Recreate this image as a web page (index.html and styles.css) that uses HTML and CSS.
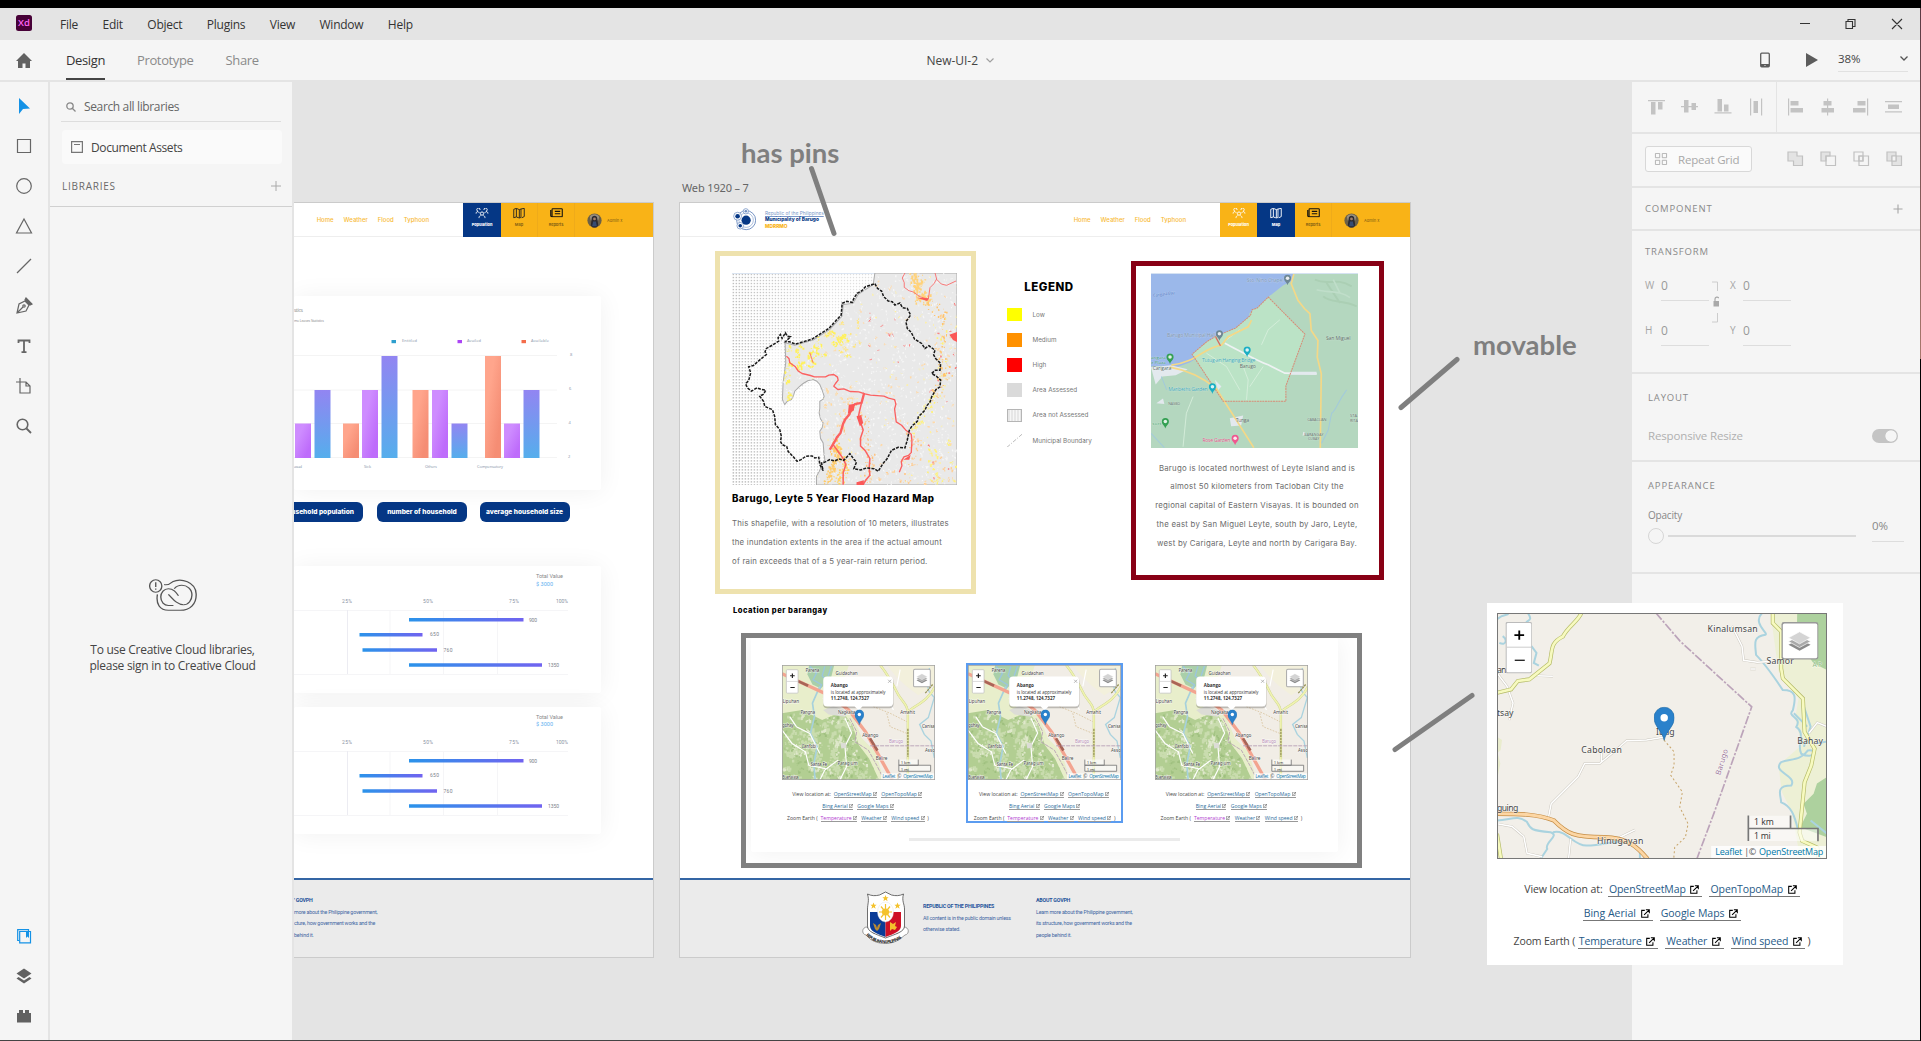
FILE: index.html
```html
<!DOCTYPE html>
<html lang="en">
<head>
<meta charset="utf-8">
<title>New-UI-2</title>
<link rel="stylesheet" href="styles.css">
</head>
<body>
<svg class="defs" aria-hidden="true">
  <defs>
    <linearGradient id="gBlue" x1="0" y1="0" x2="0" y2="1"><stop offset="0" stop-color="#9285f2"/><stop offset="1" stop-color="#55aeec"/></linearGradient>
    <linearGradient id="gPurple" x1="0" y1="0" x2="1" y2="1"><stop offset=".3" stop-color="#ce8cff"/><stop offset=".8" stop-color="#be6cfb"/></linearGradient>
    <linearGradient id="gOrange" x1="0" y1="0" x2="1" y2="1"><stop offset=".3" stop-color="#ffa58c"/><stop offset=".8" stop-color="#f58d74"/></linearGradient>
    <linearGradient id="gRange" x1="0" y1="0" x2="1" y2="0"><stop offset="0" stop-color="#2b93ea"/><stop offset="1" stop-color="#7163f0"/></linearGradient>
    <pattern id="dots" width="9" height="9" x="187" y="431" patternUnits="userSpaceOnUse"><rect x="2" y="3" width="3.200" height="3.200" fill="#777"/></pattern>
    <path id="woodsShape" d="M37 190l60-10 60 30 60-25 30 40 20 60 30 40 30 64H37z"/>
    <clipPath id="woodsClip"><use href="#woodsShape"/></clipPath>
  </defs>
  <symbol id="i-people" viewBox="0 0 40 32"><g fill="none" stroke="currentColor" stroke-width="2.800"><circle cx="20" cy="17" r="5"/><path d="M11 31v-2c0-4 3-5 5-6M29 31v-2c0-4-3-5-5-6M8 10a5 5 0 1 1 6-4M32 10a5 5 0 1 0-6-4M2 17c0-4 2-6 6-6l5 5M38 17c0-4-2-6-6-6l-5 5"/></g></symbol>
  <symbol id="i-map" viewBox="0 0 36 32"><path d="M2 4l8-3 9 4 5-2v26l-5 2-9-4-8 3zM10 1v26M19 5v26M24 3l10-2v25l-8 4" fill="none" stroke="currentColor" stroke-width="2.800"/></symbol>
  <symbol id="i-news" viewBox="0 0 38 28"><path d="M8 2h26a2 2 0 0 1 2 2v20a2 2 0 0 1-2 2H8a2 2 0 0 1-2-2V4a2 2 0 0 1 2-2zM2 6v17c0 2 2 3 5 3M14 10h16M14 17h16" fill="none" stroke="#111" stroke-width="3.200"/></symbol>
  <symbol id="i-ext" viewBox="0 0 26 26"><path d="M11 4H2v20h18v-9M14 2h10v10M23 3L9 17" fill="none" stroke="currentColor" stroke-width="3"/></symbol>
  <symbol id="i-pin" viewBox="0 0 60 100"><path d="M30 99C24 70 0 58 0 32a30 31 0 0 1 60 0C60 58 36 70 30 99z" fill="#2a81cb" stroke="#236da8" stroke-width="2"/><circle cx="30" cy="32" r="11" fill="#fff"/></symbol>
  <symbol id="i-gpin" viewBox="0 0 22 32"><path d="M11 31C9 22 1 20 1 11a10 10 0 0 1 20 0c0 9-8 11-10 20z" fill="currentColor"/><circle cx="11" cy="11" r="5" fill="#fff" opacity=".85"/></symbol>
  <symbol id="i-layers3" viewBox="0 0 68 60"><path d="M1 41l33-17 33 17-33 18z" fill="#8b8b8b"/><path d="M1 31l33-17 33 17-33 18z" fill="#a9a9a9" stroke="#fff" stroke-width="2"/><path d="M1 20L34 2l33 18-33 18z" fill="#d4d4d4" stroke="#fff" stroke-width="2"/></symbol>
  <symbol id="avatar" viewBox="0 0 16 16"><circle cx="8" cy="8" r="7.600" fill="#6c6047"/><path d="M3 4c3-4 8-3 10 0l-1 4H4z" fill="#9a8f80"/><path d="M5 6c0-4 6-4 6 0l1 7-2 2.500H6L4 13z" fill="#2c2a30"/><circle cx="8" cy="6.300" r="1.500" fill="#a67f68"/><path d="M5.500 14l1-5h3l1 5z" fill="#364c73"/></symbol>
  <symbol id="osm-small" viewBox="37 46 457 343" preserveAspectRatio="none">
    <rect x="37" y="46" width="457" height="343" fill="#f1ede6"/>
    <path d="M37 46h200l-20 60-60 40 40 40 50 10 30 70 40 40 24 83H37z" fill="#e8eecb"/>
    <use href="#woodsShape" fill="#b2ce92"/>
    <g id="woodFlecks" clip-path="url(#woodsClip)"></g>
    <path d="M350 46h144v60l-50 30-40-30-30-30z" fill="#f3f0dc"/>
    <path d="M118 46h75l-10 40-30 30-25-12-15-30z" fill="#a9cfa9"/>
    <path d="M120 50l20 20-10 20 25 15-8 20M165 50l-8 28 14 14M185 48l-10 30" fill="none" stroke="#9cc6dd" stroke-width="4"/>
    <path d="M150 110l-22 50 6 40-12 50 20 40-10 50 4 49" fill="none" stroke="#a6d1dc" stroke-width="5"/>
    <path d="M478 55l-12 30 10 40 16 18-18 60-26 20 14 30 20 20 10 50" fill="none" stroke="#aad3df" stroke-width="4"/>
    <path d="M37 240l30 40 40 25 10 40 50 10M60 200l20 30 40 20 30 60M210 389l20-40-5-60 20-40-20-45M150 389l15-30 40-30M300 90l40 30 30 60M390 60l-10 50" fill="none" stroke="#fff" stroke-width="3.500"/>
    <path d="M330 46c25 30 45 70 55 90 20 30 28 30 28 60v193M413 186c20-20 60-30 81-76" fill="none" stroke="#c9cf8a" stroke-width="7"/>
    <path d="M330 46c25 30 45 70 55 90 20 30 28 30 28 60v193M413 186c20-20 60-30 81-76" fill="none" stroke="#eff3b0" stroke-width="5"/>
    <path d="M413 236v84M465 130l22-26" stroke="#97945a" stroke-width="4" stroke-dasharray="7 2"/>
    <path d="M37 72l140 64 60 45 50 65 80 143" fill="none" stroke="#f3a490" stroke-width="10"/>
    <path d="M85 94l30 14M300 265l22 36" stroke="#a86557" stroke-width="8"/>
    <path d="M240 205l20 40-5 30 40 25 25 45 20 40M300 287h194" fill="none" stroke="#b49ab2" stroke-width="2.500" stroke-dasharray="12 3"/>
    <path d="M310 170l50 20 50 25M350 190l10 40 50 20" fill="none" stroke="#d2b98c" stroke-width="2" stroke-dasharray="5 4"/>
    <path d="M160 180l30-12 40 14-4 18-50-6zM212 280l15-3 3 16-16 2z" fill="#dcdcd6"/>
    <g class="map-label" font-size="14">
      <text x="107" y="66" textLength="42">Parena</text><text x="197" y="76" textLength="66">Guidaohan</text><text x="39" y="158" textLength="49">Lipuhan</text><text x="92" y="192" textLength="44">Pangna</text><text x="204" y="192" textLength="52">Nagkalta</text><text x="390" y="193" textLength="44">Amahit</text><text x="37" y="231" textLength="35">gohay</text><text x="95" y="294" textLength="45">Canfobi</text><text x="277" y="261" textLength="48">Abango</text><text x="317" y="329" textLength="35">Balire</text><text x="122" y="346" textLength="50">Santa Fe</text><text x="203" y="343" textLength="60">Parag-um</text><text x="455" y="235" textLength="39">Canisa</text><text x="464" y="306" textLength="30">Asso</text><text x="37" y="387" textLength="50">Buenavista</text><text x="357" y="280" textLength="42" fill="#b58bb4">Barugo</text>
    </g>
    <path d="M386 328v17h58v-17M386 345v18h95v-18z" fill="#fff8" stroke="#777" stroke-width="2.500"/>
    <g class="sans" font-size="13" fill="#333"><text x="392" y="342" textLength="28">1 km</text><text x="392" y="361" textLength="24">1 mi</text></g>
    <rect x="333" y="369" width="160" height="19" fill="#ffffffc0"/>
    <g class="sans" font-size="14" fill="#1581b5"><text x="337" y="384" textLength="39">Leaflet</text><text x="380" y="384" fill="#555" textLength="14">| ©</text><text x="399" y="384" textLength="89">OpenStreetMap</text></g>
    <rect x="50" y="60" width="35" height="70" rx="3" fill="#fff" stroke="#bbb" stroke-width="2"/><path d="M50 95h35" stroke="#ccc" stroke-width="2"/><path d="M61 78h14M68 71v14M62 113h13" stroke="#222" stroke-width="3.500"/>
    <rect x="430" y="59" width="50" height="52" rx="4" fill="#fff" stroke="#aaa" stroke-width="3"/><use href="#i-layers3" x="438" y="70" width="34" height="32"/>
    <rect x="160" y="83" width="210" height="92" rx="12" fill="#00000038"/>
    <path d="M172 80h185q12 0 12 12v66q0 12-12 12h-80l-11 12-12-12h-82q-12 0-12-12V92q0-12 12-12z" fill="#fff"/>
    <g class="sans" font-size="14.500" fill="#333"><text x="183" y="112" font-weight="700" textLength="51" lengthAdjust="spacingAndGlyphs">Abango</text><text x="183" y="132" textLength="163" lengthAdjust="spacingAndGlyphs">is located at approximately</text><text x="183" y="151" font-weight="700" textLength="114" lengthAdjust="spacingAndGlyphs">11.2748, 124.7327</text></g>
    <path d="M354 90l9 9m0-9l-9 9" stroke="#aaa" stroke-width="2.500"/>
    <use href="#i-pin" x="254" y="179" width="28" height="46"/>
    <rect x="38" y="47" width="455" height="341" fill="none" stroke="#a0a0a0" stroke-width="2.500"/>
  </symbol>
</svg>

<div class="app">
  <header class="titlebar">
    <svg class="xd" viewBox="0 0 16 16"><rect width="16" height="16" rx="2.500" fill="#470137"/><text x="8" y="11.300" text-anchor="middle" font-size="9.500" font-weight="600" fill="#ff61f6">Xd</text></svg>
    <nav class="menu"><span>File</span><span>Edit</span><span>Object</span><span>Plugins</span><span>View</span><span>Window</span><span>Help</span></nav>
    <div class="winctl">
      <svg viewBox="0 0 104 12"><g fill="none" stroke="#333" stroke-width="1.100"><path d="M0 5.500h10M46 3.500h6.500v7H46zM48 3.500v-2h7v7h-2.500M92 1l10 10m0-10L92 11"/></g></svg>
    </div>
  </header>
  <div class="toolbar">
    <svg class="home" viewBox="0 0 16 15"><path d="M8 0l8 8h-2v7H9.500v-4.500h-3V15H2V8H0z" fill="#616161"/></svg>
    <nav class="modes"><span class="on">Design</span><span>Prototype</span><span>Share</span></nav>
    <div class="docname">New-UI-2 <svg viewBox="0 0 8 5"><path d="M.5.5L4 4 7.500.5" fill="none" stroke="#a0a0a0" stroke-width="1.200"/></svg></div>
    <svg class="phone" viewBox="0 0 10 16"><rect x=".7" y="1.200" width="8.600" height="13.600" rx="1" fill="none" stroke="#5c5c5c" stroke-width="1.300"/><path d="M1 12h8v3H1z" fill="#5c5c5c"/><circle cx="5" cy="13.500" r=".6" fill="#fff"/></svg>
    <svg class="play" viewBox="0 0 12 14"><path d="M0 0l12 7-12 7z" fill="#5c5c5c"/></svg>
    <div class="zoomsel"><span>38%</span><svg viewBox="0 0 8 5"><path d="M.5.5L4 4 7.500.5" fill="none" stroke="#555" stroke-width="1.300"/></svg></div>
  </div>

  <div class="body">
    <aside class="tools">
      <div class="toolset">
        <svg viewBox="0 0 20 20"><path d="M5 2v16l4-5 7-.5z" fill="#1492e6"/></svg>
        <svg viewBox="0 0 20 20"><path d="M3.500 3.500h13v13h-13z"/></svg>
        <svg viewBox="0 0 20 20"><circle cx="10" cy="10" r="7.300"/></svg>
        <svg viewBox="0 0 20 20"><path d="M10 3l7.500 14h-15z"/></svg>
        <svg viewBox="0 0 20 20"><path d="M3 17L17 3"/></svg>
        <svg viewBox="0 0 20 20"><path d="M3 17l2-9 6-3 4 4-3 6zM3 17l6-6"/><path d="M12 2l6 6-2 1-5-5z" fill="#666"/><circle cx="10" cy="10" r="1.200"/></svg>
        <svg viewBox="0 0 20 20"><path d="M4.500 7V4.500h11V7M10 4.500v12M7.500 16.200h5" stroke-width="1.800"/></svg>
        <svg viewBox="0 0 20 20"><path d="M6 2v4M2 6h10l4 4v7H6V6M12 6v4h4"/></svg>
        <svg viewBox="0 0 20 20"><circle cx="8.500" cy="8.500" r="5.300" stroke-width="1.600"/><path d="M12.500 12.500L17 17" stroke-width="1.800"/></svg>
      </div>
      <div class="toolset bottom">
        <svg viewBox="0 0 20 20"><path d="M14.500 5V3.700H3.700v10.800H5M5.700 5.500h10.800v11.300H5.700z" stroke="#1492e6"/><path d="M12 5.500h3V12l-1.500-1.500L12 12z" fill="#1492e6" stroke="none"/></svg>
        <svg viewBox="0 0 20 20"><path d="M10 2.500l7.500 5-7.500 5-7.500-5zM4.500 11L2.500 12.500l7.500 5 7.500-5-2-1.500-5.500 3.500z" fill="#616161" stroke="none"/></svg>
        <svg viewBox="0 0 20 20"><path d="M3 7h2V4h4v3h2V4h4v3h2v9.500H3z" fill="#616161" stroke="none"/></svg>
      </div>
    </aside>
    <aside class="libs">
      <div class="search"><svg viewBox="0 0 10 10"><circle cx="4" cy="4" r="3.200"/><path d="M6.500 6.500L9.500 9.500"/></svg><span>Search all libraries</span></div>
      <div class="docassets"><svg viewBox="0 0 12 12"><path d="M.6.600h10.800v10.800H.6zM3 3.500h6"/></svg><span>Document Assets</span></div>
      <div class="libhead"><span>LIBRARIES</span><svg viewBox="0 0 10 10"><path d="M5 0v10M0 5h10"/></svg></div>
      <div class="signin">
        <svg viewBox="0 0 114 92" preserveAspectRatio="none"><g fill="none" stroke="#555" stroke-width="3.200"><ellipse cx="16" cy="20" rx="14.500" ry="18"/><path d="M16 9v14M16 27v4"/><path d="M36 16c6 2 14-2 20-8 20-12 55 0 56 35 1 28-14 47-38 47H46C26 90 16 72 20 44"/><path d="M82 74c12 0 20-14 20-28 0-18-12-28-24-28-8 0-14 4-18 10"/><path d="M70 48C64 38 58 28 46 28c-10 0-18 10-18 24s8 24 18 24h12"/><path d="M46 44c10 12 20 30 36 30"/></g></svg>
        <p>To use Creative Cloud libraries,<br>please sign in to Creative Cloud</p>
      </div>
    </aside>

    <main class="canvas">
      <section class="artboard ab1">
        <header class="sitebar">
          <nav class="sitenav"><span>Home</span><span>Weather</span><span>Flood</span><span>Typhoon</span></nav>
          <div class="tabs">
            <div class="tab active"><svg class="ic-people"><use href="#i-people"/></svg><b>Population</b></div>
            <div class="tab line"><svg class="ic-map"><use href="#i-map"/></svg><b>Map</b></div>
            <div class="tab line"><svg class="ic-news"><use href="#i-news"/></svg><b>Reports</b></div>
            <div class="user"><svg><use href="#avatar"/></svg><span>Admin x</span></div>
          </div>
        </header>
        <div class="card chart">
          <svg viewBox="294 296 307.500 194">
            <g class="sans" fill="#888" font-size="4"><text x="294" y="312" font-size="5" textLength="9">stics</text><text x="294" y="321.500" font-size="3.500" textLength="30">mo Leaves Statistics</text></g>
            <g fill="none" stroke="#f4f4f4"><path d="M294 355.500h263M294 390h263M294 423.500h263M294 457.500h263"/></g>
            <path d="M391.500 340h4.500v3.200h-4.500z" fill="#2e9fce"/><path d="M457.500 340h4.500v3.200h-4.500z" fill="#ac45f5"/><path d="M521.500 340h4.500v3.200h-4.500z" fill="#f46d4c"/>
            <g class="sans" fill="#8592a8" font-size="4"><text x="402" y="341.500" textLength="15">Entitled</text><text x="467" y="341.500" textLength="14">Availed</text><text x="531" y="341.500" textLength="18">Available</text>
            <text x="570" y="356">8</text><text x="569" y="390">6</text><text x="568.500" y="423.500">4</text><text x="568" y="457.500">2</text>
            <text x="294" y="467.500" textLength="8">asual</text><text x="364" y="467.500" textLength="7">Sick</text><text x="425" y="467.500" textLength="12">Others</text><text x="477" y="467.500" textLength="26">Compensatory</text></g>
            <g fill="url(#gPurple)"><path d="M295 423.500h16V458h-16z"/><path d="M362 390h16v68h-16z"/><path d="M432 390h16v68h-16z"/><path d="M504 423.500h16V458h-16z"/></g>
            <g fill="url(#gBlue)"><path d="M314.500 390h16v68h-16z"/><path d="M381.500 356h16v102h-16z"/><path d="M451.500 423.500h16V458h-16z"/><path d="M523.500 390h16v68h-16z"/></g>
            <g fill="url(#gOrange)"><path d="M343 423.500h16V458h-16z"/><path d="M412.500 390h16v68h-16z"/><path d="M485 356h16v102h-16z"/></g>
          </svg>
        </div>
        <div class="pills"><span class="cut">ousehold population</span><span>number of household</span><span>average household size</span></div>
        <div class="card ranges one">
          <svg viewBox="294 566 307.500 127">
            <g id="rangeChart">
              <g class="cond" font-size="5" fill="#8a94a3"><text x="342" y="603" textLength="10">25%</text><text x="423" y="603" textLength="10">50%</text><text x="509" y="603" textLength="10">75%</text><text x="556" y="603" textLength="12">100%</text></g>
              <g fill="none" stroke="#f5f5f7"><path d="M294 610.500h274M294 674.500h274M390 610v64M443.500 610v64M497.500 610v64"/><path d="M347.500 610v64" stroke="#ececf2"/></g>
              <g fill="url(#gRange)"><path d="M409 618h114.500v3.600H409z"/><path d="M359.500 633h63v3.600h-63z"/><path d="M362.500 648.200h74.500v3.600h-74.500z"/><path d="M409 663.200h133v3.600H409z"/></g>
              <g class="cond" font-size="5" fill="#7d838c"><text x="529" y="621.500" textLength="8">900</text><text x="430" y="636.200" textLength="9">650</text><text x="443.500" y="652.200" textLength="9">760</text><text x="548" y="667" textLength="11">1350</text></g>
            </g>
            <g class="cond" font-size="5.500"><text x="536" y="578" fill="#888" textLength="27">Total Value</text><text x="536" y="586" fill="#5fb0f0" textLength="17">$ 3000</text></g>
          </svg>
        </div>
        <div class="card ranges">
          <svg viewBox="294 566 307.500 127">
            <use href="#rangeChart"/>
            <g class="cond" font-size="5.500"><text x="536" y="578" fill="#888" textLength="27">Total Value</text><text x="536" y="585" fill="#5fb0f0" textLength="17">$ 3000</text></g>
          </svg>
        </div>
        <footer class="sitefoot">
          <div class="fcol fa"><h4>' GOVPH</h4><p>more about the Philippine government,<br>cture, how government works and the<br>behind it.</p></div>
        </footer>
      </section>

      <div class="abname">Web 1920 – 7</div>
      <section class="artboard ab2">
        <header class="sitebar">
          <div class="brand">
            <svg viewBox="0 0 70 68"><g fill="none" stroke="#5b7fb8" stroke-width="2.500"><circle cx="40" cy="36" r="29"/><circle cx="40" cy="36" r="22" stroke="#9db3d8"/></g><circle cx="40" cy="36" r="14" fill="#053785"/><g fill="#fff" stroke="#5b7fb8" stroke-width="2"><circle cx="14" cy="24" r="12"/><circle cx="39" cy="9" r="8"/><circle cx="22" cy="53" r="10"/></g><g fill="#053785"><circle cx="14" cy="24" r="7"/><circle cx="39" cy="9" r="4" fill="#6f8fc2"/><circle cx="22" cy="53" r="5.500"/></g></svg>
            <div><i>Republic of the Philippines</i><b>Municipality of Barugo</b><b class="o">MDRRMO</b></div>
          </div>
          <nav class="sitenav"><span>Home</span><span>Weather</span><span>Flood</span><span>Typhoon</span></nav>
          <div class="tabs">
            <div class="tab lit"><svg class="ic-people"><use href="#i-people"/></svg><b>Population</b></div>
            <div class="tab active"><svg class="ic-map"><use href="#i-map"/></svg><b>Map</b></div>
            <div class="tab line"><svg class="ic-news"><use href="#i-news"/></svg><b>Reports</b></div>
            <div class="user"><svg><use href="#avatar"/></svg><span>Admin x</span></div>
          </div>
        </header>
        <div class="row">
          <article class="frame sand">
            <svg class="hazard" viewBox="187 431 674 635" preserveAspectRatio="none">
              <defs>
                <linearGradient id="fade"><stop offset="0" stop-color="#fff" stop-opacity="0"/><stop offset=".65" stop-color="#fff" stop-opacity=".6"/></linearGradient>
                <path id="land" d="M615 431H861V1066H440v-26l8-14 7-16 10-20-3-24-2-26-8-14-2-21 7-10 3-15-8-12-4-18 2-14 0-21 10-6 3-9-6-18-7-17-9-10-11-5-16 4-14 8-12 10-13 13-4 14-6 11-12 5-8 10-7-15 2-50 8-60-2-60 29 7 55-15 50-32 37-40 3-35 30-3 15-27 45-30z"/>
                <clipPath id="landClip"><use href="#land"/></clipPath>
              </defs>
              <rect x="187" y="431" width="674" height="635" fill="#fff"/>
              <rect x="187" y="431" width="450" height="635" fill="url(#dots)"/>
              <rect x="187" y="431" width="450" height="635" fill="url(#fade)"/>
              <path d="M343 640l-50 30-55 47 5 20-15 30 17 22 25-4 10 30 28 28 22 62 25 60 28 32 62-10 15-20 5-100-8-100-30-15-60 40-25 18z" fill="#fff" opacity=".6"/>
              <path d="M187 431.500h674" stroke="#cfdcee" stroke-width="3"/>
              <use href="#land" fill="#e9e9e9" stroke="#aaa" stroke-width="3"/>
              <g clip-path="url(#landClip)">
                <g id="specks"></g>
                <g fill="none" stroke="#fb6161" stroke-linejoin="round">
                  <path stroke-width="4" d="M350 680l8 8 2 12 17 12 8 12 12 8 25 6 12 4 33 0 10-5 15-2 11 8 2 9-8 10-5 8 12 10 18-2 20 8 25 1 18 6 17 4 40 3 14 6 18 4 4 14-4 14 2 16 3 23 16 10 12 14 17 13 2 20-2 35-8 8-14 5-8 14 2 12-8 20"/>
                  <path stroke-width="7" d="M583 790l-8 30-20 4-10 10-6 20-12 14-7 14-8 28-10 12-8 15-14 23"/>
                  <path stroke-width="4.500" d="M575 820l-6 25-4 20 8 16 7 20-8 24 0 24 14 14 14 24-2 26 2 24-12 14-8 14M490 945l16 22 14 20 8 18-8 24 0 36"/>
                  <path stroke-width="2.500" d="M705 431l-8 15 6 14 0 14 14 10 13 4 20 14 25 8 5-35 12-12 8-14-5-19M800 450l14 14 16 4 28-13M430 700l-10-30"/>
                </g>
                <path d="M838 616l23-8v30l-12-6zM537 826l18-3-3 20-18 10zM560 860l14-4 6 24-10 10zM560 1058l22-6v14h-22zM740 505l36 2-4 8zM700 990l22-14-4 14z" fill="#fb5858"/>
              </g>
              <path d="M615 463l8 14 12 8 6 16 14 14 12 2 8 10 15-6 8 14 14 2 10 20-14 20 4 20 12 12 10 20 21 13 10 15 12-8 18 13-4 14 6 11 15 15-2 20-14 0-11 10 14 8 13 12-2 20-12 8 -13 22-4 14-10 12-6 14-20 20-2 12-8 8-8 6-9 14-6 30-7 23-20-2-20 9-14 26-12 14-14 23-12-8-23-2-18 6-20-4 8-20-8-8-12-17-18 20-14-4-14 6-14-4-16 8-9 2 5 23-10-18-3-22-12 2-8-6-19 1-14 10-12 5-12-14-15-16-4-14-14-6-5-10 3-14-5-21-13-15-2-24-7-21-11-4-12-6-3-14-12-16 12-6 6-12-12-2-14-5-17 10-12-10-5-12 9-10 6-23-6-18 14-4 16-14 23-19-4-8 4-10 18-10 19-12-2-10 7-10 5 12 10-17 5 10 10 2-15 15 12 0 18 7 50-15 50-32 37-40 3-35 14-6 16 3 6-14 9-13 14-8 11-12z" fill="none" stroke="#1a1a1a" stroke-width="4.500" stroke-dasharray="9 3.500"/>
            </svg>
            <h3>Barugo, Leyte 5 Year Flood Hazard Map</h3>
            <p>This shapefile, with a resolution of 10 meters, illustrates<br>the inundation extents in the area if the actual amount<br>of rain exceeds that of a 5 year-rain return period.</p>
          </article>
          <div class="legend">
            <h2>LEGEND</h2>
            <ul>
              <li><i class="sw low"></i>Low</li><li><i class="sw med"></i>Medium</li><li><i class="sw high"></i>High</li><li><i class="sw area"></i>Area Assessed</li><li><i class="sw grid"></i>Area not Assessed</li>
              <li><svg class="sw" viewBox="0 0 15 13"><path d="M0 13L15 0" stroke="#bbb" stroke-dasharray="4 1.500 1 1.500"/></svg>Municipal Boundary</li>
            </ul>
          </div>
          <article class="frame maroon">
            <svg viewBox="514 280 620 524" preserveAspectRatio="none">
              <rect x="514" y="280" width="620" height="524" fill="#b4d7bf"/>
              <path d="M514 280H945l-10 25-25 12-45 35-20 28-36 20-4 25-40 40-30 15-55 38-50 30-60 22-20-12-36 2z" fill="#9bb8ea"/>
              <path d="M865 352L975 463l-57 155v46H730L637 523l45-38 25-15 60-25 45-38 5-17 15-5z" fill="#bbe3c6"/>
              <path d="M900 420l-35 30-20 45M790 560l15 40-5 60M640 650l-20 50-10 100M850 560l-40 60M680 520l60 40 40 70M740 480l40-30" fill="none" stroke="#d8efdd" stroke-width="2.500"/>
              <path d="M1005 300c40 20 60-10 110 20M1030 350c20 20 60 10 100 30M1040 310l40 60" fill="none" stroke="#abcfb4" stroke-width="6"/>
              <path d="M1010 330c30 10 70 0 100 24M1060 300l20 40" fill="none" stroke="#c0deca" stroke-width="5"/>
              <path d="M735 490c40 20 90 50 130 65l50 25 95 2" fill="none" stroke="#eef2f3" stroke-width="5"/>
              <path d="M514 562l60-6 50 12-36 18-40 4-20 24M750 715l40-8-6 30-30 2zM930 576h80v9h-80zM530 670l20-14 4 16zM970 755l12 8-14 4zM705 600l20 20-10 10z" fill="#e3e9ee"/>
              <path d="M570 562c60 10 110 40 140 65l112 176M575 556c80-10 90-50 150-60l20-25 60-30 10-20M942 282l-8 30 20 50 20 25 16 15 4 50 20 30-2 50 12 50-3 222" fill="none" stroke="#f4d887" stroke-width="5"/>
              <path d="M1100 630c-30 40-30 60-45 70l-10 50-20 40M545 590l16 40M514 760l40 43" fill="none" stroke="#a3cadb" stroke-width="3"/>
              <path d="M865 352L975 463l-57 155v46H730L637 523l45-38 25-15 60-25 45-38 5-17 15-5z" fill="none" stroke="#d78b76" stroke-width="3" stroke-dasharray="6 2"/>
              <path d="M708 472l14 26" stroke="#d86a60" stroke-width="4"/>
              <g color="#6d8794"><use href="#i-gpin" x="911" y="284" width="24" height="34"/><use href="#i-gpin" x="707" y="450" width="24" height="34"/></g>
              <g color="#1aaec4"><use href="#i-gpin" x="790" y="499" width="24" height="34"/><use href="#i-gpin" x="686" y="609" width="24" height="34"/></g>
              <g color="#34a053"><use href="#i-gpin" x="559" y="520" width="24" height="34"/><use href="#i-gpin" x="545" y="713" width="24" height="34"/></g>
              <use href="#i-gpin" x="754" y="763" width="24" height="34" color="#f0568f"/>
              <g class="sans halo" font-size="15.500" fill="#5d6d68">
                <text x="801" y="306" fill="#7796b5" textLength="110">Sto. Nino Chapel</text><text x="521" y="352" fill="#4272c4" font-size="13" textLength="65" transform="rotate(-8 521 352)">Carigara Bay</text>
                <text x="562" y="473" fill="#7c93aa" textLength="145">Barugo Municipal Hall</text><text x="514" y="537" fill="#3c9a66" font-size="13" textLength="44">arigara</text><text x="514" y="552" fill="#3c9a66" font-size="13" textLength="44">e Plaza</text><text x="519" y="571" textLength="56">Carigara</text>
                <text x="667" y="546" fill="#3fa9ba" textLength="160">Tutug-an Hanging Bridge</text><text x="780" y="564" textLength="48">Barugo</text><text x="566" y="632" fill="#3fa9ba" textLength="118">Maribeths Garden</text><text x="566" y="676" font-size="11" textLength="35">NAGBO</text><text x="1038" y="481" textLength="74">San Miguel</text><text x="768" y="727" textLength="40">Tunga</text><text x="668" y="785" fill="#e0568a" textLength="84">Rose Garden</text><text x="518" y="735" fill="#3c9a66" font-size="13" textLength="27">sort</text><text x="982" y="723" font-size="12" textLength="58">CABACUAN</text><text x="973" y="768" font-size="11" textLength="58">BARANGAY</text><text x="984" y="779" font-size="11" textLength="34">CUBAY</text><text x="1110" y="710" font-size="12" textLength="24">STA.</text><text x="1110" y="725" font-size="12" textLength="24">RITA</text>
              </g>
              <rect x="514" y="280" width="620" height="3" fill="#d5e2f2"/>
            </svg>
            <p>Barugo is located northwest of Leyte Island and is<br>almost 50 kilometers from Tacloban City the<br>regional capital of Eastern Visayas. It is bounded on<br>the east by San Miguel Leyte, south by Jaro, Leyte,<br>west by Carigara, Leyte and north by Carigara Bay.</p>
          </article>
        </div>
        <h3 class="loc">Location per barangay</h3>
        <div class="frame slate">
          <div class="card places">
            <div class="cols">
              <div class="place"><svg><use href="#osm-small"/></svg>
                <p>View location at: <a>OpenStreetMap <svg><use href="#i-ext"/></svg></a> <a>OpenTopoMap <svg><use href="#i-ext"/></svg></a></p><p><a>Bing Aerial <svg><use href="#i-ext"/></svg></a> <a>Google Maps <svg><use href="#i-ext"/></svg></a></p><p>Zoom Earth ( <a class="v">Temperature <svg><use href="#i-ext"/></svg></a> <a>Weather <svg><use href="#i-ext"/></svg></a> <a>Wind speed <svg><use href="#i-ext"/></svg></a> )</p></div>
              <div class="place sel"><svg><use href="#osm-small"/></svg>
                <p>View location at: <a>OpenStreetMap <svg><use href="#i-ext"/></svg></a> <a>OpenTopoMap <svg><use href="#i-ext"/></svg></a></p><p><a>Bing Aerial <svg><use href="#i-ext"/></svg></a> <a>Google Maps <svg><use href="#i-ext"/></svg></a></p><p>Zoom Earth ( <a class="v">Temperature <svg><use href="#i-ext"/></svg></a> <a>Weather <svg><use href="#i-ext"/></svg></a> <a>Wind speed <svg><use href="#i-ext"/></svg></a> )</p></div>
              <div class="place"><svg><use href="#osm-small"/></svg>
                <p>View location at: <a>OpenStreetMap <svg><use href="#i-ext"/></svg></a> <a>OpenTopoMap <svg><use href="#i-ext"/></svg></a></p><p><a>Bing Aerial <svg><use href="#i-ext"/></svg></a> <a>Google Maps <svg><use href="#i-ext"/></svg></a></p><p>Zoom Earth ( <a class="v">Temperature <svg><use href="#i-ext"/></svg></a> <a>Weather <svg><use href="#i-ext"/></svg></a> <a>Wind speed <svg><use href="#i-ext"/></svg></a> )</p></div>
            </div>
            <div class="scroll"></div>
          </div>
        </div>
        <footer class="sitefoot">
          <svg class="seal" viewBox="0 0 47 53">
            <path d="M5 36c-5 0-6 7-1 8l4 4c8 6 22 6 30 0l5-4c5-1 4-8-1-8l-6 6H11z" fill="#fff" stroke="#777" stroke-width=".7"/>
            <path id="ribbon" d="M4 44c10 11 29 11 39 0" fill="none"/><text font-size="4.200" font-weight="700" fill="#222"><textPath href="#ribbon" textLength="39">REPUBLIKA NG PILIPINAS</textPath></text>
            <path d="M23.500 1l6 3c4 1 8 1 12-1-2 7 1 10 1 15v17c0 6-9 8-19 12-10-4-18-6-18-12V18c0-5 2-8 0-15 4 2 8 2 12 1z" fill="#fff" stroke="#333" stroke-width=".7"/>
            <path d="M8 21h15.500v25C15 43 8 40 8 35z" fill="#0b3c97"/><path d="M23.500 21H39v14c0 5-7 8-15.500 11z" fill="#cf1126"/>
            <ellipse cx="23.500" cy="21" rx="8" ry="10" fill="#fff" stroke="#ddd" stroke-width=".4"/><path d="M23.500 13v16M17 21h13M19 15.500l9 11M28 15.500l-9 11" stroke="#f4c22c" stroke-width="1.200"/><circle cx="23.500" cy="21" r="3.600" fill="#f4c22c"/>
            <g fill="#f4c22c"><path id="star" d="M23.500 4l.9 2.200h2.200l-1.700 1.600.7 2.400-2.100-1.400-2.100 1.400.7-2.400-1.700-1.600h2.200z"/><use href="#star" x="-12" y="7.500"/><use href="#star" x="12" y="7.500"/><path d="M28 31l3 2 3-2-1 4 2 1-2 3-3-1-2 2v-4z"/><path d="M11 32l3 2 1 3 1-3 3-2-2 6-2 2-2-2z" fill="#b98b35"/></g>
          </svg>
          <div class="fcol fb"><h4>REPUBLIC OF THE PHILIPPINES</h4><p>All content is in the public domain unless<br>otherwise stated.</p></div>
          <div class="fcol fc"><h4>ABOUT GOVPH</h4><p>Learn more about the Philippine government,<br>its structure, how government works and the<br>people behind it.</p></div>
        </footer>
      </section>
      <div class="note n1">has pins</div>
      <div class="note n2">movable</div>
    </main>

    <aside class="props">
      <div class="sec aligns">
        <svg viewBox="1645 93 130 27"><g fill="#c3c3c3"><path d="M1648 100h17v1.200h-17zM1651 102h4.500v12.500h-4.500zM1658 102h4.500v7.500h-4.500zM1681 106h17v1.200h-17zM1684 100h4.500v12.500h-4.500zM1691.500 103h4.500v7h-4.500zM1714.500 112.300h17v1.200h-17zM1717.500 99h4.500v12.500h-4.500zM1724 104.500h4.500v7h-4.500zM1750 98.500h1.200v17h-1.200zM1761 98.500h1.200v17h-1.200zM1753.500 101h4.500v12h-4.500z"/></g></svg>
        <svg class="r" viewBox="1777 93 143 27"><g fill="#c3c3c3"><path d="M1788 98.500h1.200v17h-1.200zM1790.500 101h8v4.500h-8zM1790.500 108h12.500v4.500h-12.500zM1827 98.500h1.200v17h-1.200zM1823.500 101h8v4.500h-8zM1821.500 108h12.500v4.500h-12.500zM1867 98.500h1.200v17h-1.200zM1857.500 101h8v4.500h-8zM1853 108h12.500v4.500H1853zM1885 101h17v1.200h-17zM1885 111.300h17v1.200h-17zM1888 104.500h11v4.500h-11z"/></g></svg>
      </div>
      <div class="sec repeat">
        <div class="rg"><svg viewBox="0 0 14 14"><path d="M.5.500h5v5h-5zM8.500.500h5v5h-5zM.5 8.500h5v5h-5zM8.500 8.500h5v5h-5z"/></svg>Repeat Grid</div>
        <svg class="bool" viewBox="0 0 116 16"><g fill="none" stroke="#c1c1c1" stroke-width="1.200"><path d="M1 1h9v4h5.500v9.500H6.500V10H1z" fill="#e3e3e3"/><path d="M34 1h9v4h-4v5h-5z" fill="#e3e3e3"/><path d="M39 5h9.500v9.500H39z"/><path d="M67 1h9v9h-9z"/><path d="M72 5h9.500v9.500H72z"/><path d="M72 5h4v5h-4z"/><path d="M100 1h9v9h-9zM105 5h9.500v9.500H105z" fill="#e3e3e3"/><path d="M105 5h4v5h-4z" fill="#f5f5f5"/></g></svg>
      </div>
      <div class="sec comp"><h5>COMPONENT</h5><svg viewBox="0 0 10 10"><path d="M5 .5v9M.5 5h9" stroke="#a5a5a5" stroke-width="1.100"/></svg></div>
      <div class="sec trans"><h5>TRANSFORM</h5>
        <div class="fields">
          <div><label>W</label><span>0</span></div><svg viewBox="0 0 10 42"><path d="M3 1h5.500v9M3 41h5.500v-9" fill="none" stroke="#ccc" stroke-width="1"/><path d="M4.500 20H12v5.500H4.500z" fill="#a9a9a9"/><path d="M6 20v-2a2 2 0 0 1 3.800-.8" fill="none" stroke="#a9a9a9" stroke-width="1.200"/></svg><div class="b"><label>X</label><span>0</span></div>
          <div><label>H</label><span>0</span></div><div class="b"><label>Y</label><span>0</span></div>
        </div>
      </div>
      <div class="sec lay"><h5>LAYOUT</h5><div class="rr"><span>Responsive Resize</span><i class="toggle"></i></div></div>
      <div class="sec app2"><h5>APPEARANCE</h5><div class="op"><div class="sl"><span>Opacity</span><div><i></i><b></b></div></div><em>0%</em></div></div>
    </aside>
  </div>

  <svg class="strokes" viewBox="0 0 1920 1040"><path d="M811.500 168.500L834 233.500M1401 407.500L1457 359.500M1395 749.500L1472 695.500"/></svg>

  <div class="mapcard">
    <svg viewBox="113 71 986 734" preserveAspectRatio="none">
      <rect x="113" y="71" width="986" height="734" fill="#f2efe9"/>
      <path d="M930 71h169v734h-80l-25-140-30-60-10-80 70-60-20-80 10-60-60-80z" fill="#edf0d5"/>
      <path d="M1010 71h89v170l-40-20-30-40-20-60zM1099 560l-30 20-10 30-30 30 10 30-20 40 80 30z" fill="#add19e"/>
      <path d="M113 440l15 10-4 30-11 10zM113 480l10 40-10 50z" fill="#e9eccd"/>
      <g fill="none" stroke="#aad3df" stroke-width="6"><path d="M113 90c20-20 40-10 30-19M205 71c14 20 5 20-5 28M120 160c20 10 25-10 10-20M216 170l15 20-8 30 15 8M113 690c40 0 60-20 90 5 10 20 10 25 70 30 30 10-20 30-10 50l-20 30M280 725c40-10 60 40 100 40 60 0 80-20 130-10l30 25 0 25"/><path d="M905 71c-30 30 20 60 10 65-40 5-30 30-28 60 20 20 50 60 80 105 40 0 40 20 30 60-20 20 30 20 10 50 30 20 0 50 15 80 40 20 50-15 20-10-20 30-50 25-80 35-30 30 50 40 30 70-50 0-30 30-30 50 30 10 40 40 50 80M1030 350l20 60-20 60M1000 370l40 40M1050 690l50 40M1070 460l29-6"/></g>
      <path d="M480 470l20-18 60-2 50-8M480 470l-60 50-45 0-20 40-80 80-8 40M425 480v35M815 110l30 60 5 42 40 6 40-2M870 238h16M230 258l50 2M113 250l30 40 18 50-12 50M113 700l45 8 35 30 10 50 45 10M333 745l-6 58M480 740l45-22M1045 430l25-32 29 12" fill="none" stroke="#c9c5bc" stroke-width="7"/>
      <path d="M480 470l20-18 60-2 50-8M480 470l-60 50-45 0-20 40-80 80-8 40M425 480v35M815 110l30 60 5 42 40 6 40-2M870 238h16M230 258l50 2M113 250l30 40 18 50-12 50M113 700l45 8 35 30 10 50 45 10M333 745l-6 58M480 740l45-22M1045 430l25-32 29 12" fill="none" stroke="#fff" stroke-width="4.500"/>
      <g fill="none"><path d="M365 71c-10 25-40 40-55 70-40 20-30 40-40 80l-60 48-35 5-20 25-42 10M937 71v30l25 25v110l5 30 60 60 5 100 30 50-10 50-20 50-15 150 8 25 45 20 5 40M113 730l12 75" stroke="#b5bb68" stroke-width="12"/><path d="M365 71c-10 25-40 40-55 70-40 20-30 40-40 80l-60 48-35 5-20 25-42 10M937 71v30l25 25v110l5 30 60 60 5 100 30 50-10 50-20 50-15 150 8 25 45 20 5 40M113 730l12 75" stroke="#f7fabf" stroke-width="8"/></g>
      <g fill="none"><path d="M113 670c60 0 120 0 170 20 40 40 60 50 150 50 70 0 100 30 130 65" stroke="#c58c43" stroke-width="13"/><path d="M113 670c60 0 120 0 170 20 40 40 60 50 150 50 70 0 100 30 130 65" stroke="#fcd6a4" stroke-width="9"/></g>
      <path d="M588 71l72 84 214 196-110 310-54 144" fill="none" stroke="#bca4ba" stroke-width="5" stroke-dasharray="26 5 7 5"/>
      <path d="M612 450l30 35v40l-10 30 35 50-8 45 25 50-8 40-32 30-3 35" fill="none" stroke="#c8a56a" stroke-width="3" stroke-dasharray="6 7"/>
      <g class="map-label" font-size="26">
        <text x="742" y="127" textLength="150">Kinalumsan</text><text x="918" y="222" textLength="82">Samor</text><text x="113" y="250" textLength="28">an</text><text x="113" y="378" textLength="49">tsay</text><text x="365" y="489" textLength="121">Caboloan</text><text x="588" y="436" textLength="56">Ibag</text><text x="1010" y="461" textLength="77">Bahay</text><text x="113" y="663" textLength="64">guing</text><text x="412" y="761" textLength="138">Hinugayan</text><text x="780" y="556" textLength="80" font-size="22" fill="#a07a9e" transform="rotate(-73 780 556)">Barugo</text><text x="1056" y="232" font-size="20" fill="#8fb884" textLength="28">AP</text>
      </g>
      <use href="#i-pin" x="582" y="351" width="61" height="101"/>
      <rect x="139" y="98" width="78" height="153" rx="4" fill="#bbb"/><rect x="142" y="101" width="73" height="147" rx="4" fill="#fff"/><path d="M142 173h73" stroke="#ccc" stroke-width="3"/><path d="M165 137h29M179.500 123v28" stroke="#000" stroke-width="5.500"/><path d="M166 212h30" stroke="#000" stroke-width="3.500"/>
      <rect x="963" y="98" width="110" height="112" rx="7" fill="#999"/><rect x="967" y="102" width="103" height="104" rx="5" fill="#fff"/><use href="#i-layers3" x="982" y="125" width="70" height="60"/>
      <path d="M863 676v36h127v-36M863 714v37h209v-37z" fill="#ffffff80" stroke="none"/><path d="M864 675v76M990 675v37M864 714h208v38" fill="none" stroke="#777" stroke-width="5"/>
      <g class="sans" font-size="26" fill="#333"><text x="881" y="704" textLength="59">1 km</text><text x="881" y="746" textLength="50">1 mi</text></g>
      <rect x="753" y="766" width="346" height="39" fill="#ffffffd0"/>
      <g class="sans" font-size="27" fill="#0078a8"><text x="765" y="794" textLength="81">Leaflet</text><text x="852" y="794" textLength="36" fill="#555">| ©</text><text x="896" y="794" textLength="192">OpenStreetMap</text></g>
      <rect x="114.500" y="72.500" width="983" height="731" fill="none" stroke="#777" stroke-width="3"/>
    </svg>
    <p class="l1">View location at:&nbsp; <a>OpenStreetMap <svg><use href="#i-ext"/></svg></a><a>OpenTopoMap <svg><use href="#i-ext"/></svg></a></p>
    <p class="l2"><a>Bing Aerial <svg><use href="#i-ext"/></svg></a><a>Google Maps <svg><use href="#i-ext"/></svg></a></p>
    <p class="l3">Zoom Earth ( <a>Temperature <svg><use href="#i-ext"/></svg></a><a>Weather <svg><use href="#i-ext"/></svg></a><a>Wind speed <svg><use href="#i-ext"/></svg></a> )</p>
  </div>
</div>
<script src="terrain.js"></script>
</body>
</html>
```
FILE: styles.css
```css
* { box-sizing: border-box; margin: 0; padding: 0; }
html, body { width: 1921px; height: 1041px; overflow: hidden; }
body { background: linear-gradient(#000 0 8px, #5a3a44 8px, #a8786c 359px, #000 359px); font-family: "Open Sans", "Noto Sans", sans-serif; color: #444; }
svg { display: block; }
h2, h3, h4, h5 { font-weight: 700; }
ul { list-style: none; }
i, em { font-style: normal; }
.defs { position: absolute; width: 0; height: 0; }
.sans { font-family: "Open Sans", sans-serif; }
.cond { font-family: Roboto, sans-serif; }
.map-label { font-family: "Noto Sans", sans-serif; fill: #444; }
.map-label text { stroke: #ffffffb0; stroke-width: 2.5px; paint-order: stroke; }
.halo text { stroke: #ffffff50; stroke-width: 2px; paint-order: stroke; }

.app { position: relative; width: 1920px; height: 1041px; display: flex; flex-direction: column; border-top: 8px solid #000; border-bottom: 1px solid #444; background: #e4e4e4; }
.titlebar { height: 32px; flex: none; display: flex; align-items: center; padding-left: 16px; background: #e4e4e4; }
.xd { width: 16px; height: 16px; margin-top: -2px; }
.menu { display: flex; gap: 24.500px; margin-left: 28px; padding-top: 1px; font-size: 12px; letter-spacing: -.25px; color: #333; }
.winctl { margin: 0 16px 0 auto; }
.winctl svg { width: 104px; height: 12px; }
.toolbar { height: 40px; flex: none; display: flex; align-items: center; padding-left: 16px; background: #f5f5f5; }
.home { width: 16px; height: 15px; }
.modes { display: flex; gap: 32px; margin-left: 34px; height: 40px; font-size: 13px; letter-spacing: -.37px; line-height: 41px; color: #8a8a8a; }
.modes .on { color: #333; border-bottom: 2px solid #444; }
.docname { display: flex; align-items: center; gap: 8px; margin-left: 668px; width: 80px; padding-top: 1px; font-size: 12px; letter-spacing: -.05px; color: #444; white-space: nowrap; }
.docname svg, .zoomsel svg { width: 8px; height: 5px; }
.phone { width: 10px; height: 16px; margin-left: auto; }
.play { width: 12px; height: 14px; margin-left: 36px; }
.zoomsel { display: flex; align-items: center; justify-content: space-between; width: 70px; height: 26px; margin: -2px 12px 0 20px; padding-bottom: 1px; border-bottom: 1px solid #e1e1e1; font-size: 11.500px; letter-spacing: -.1px; }

.body { flex: 1; display: flex; min-height: 0; padding-top: 2px; }
.tools { width: 48px; flex: none; display: flex; flex-direction: column; justify-content: space-between; background: #f5f5f5; padding: 4px 0; }
.toolset svg { width: 20px; height: 20px; margin: 10px 14px 20px; fill: none; stroke: #666; stroke-width: 1.2; }
.toolset svg:first-child { stroke: none; }
.toolset.bottom svg { margin: 20px 14px 10px; }
.toolset.bottom svg:first-child { stroke: #1492e6; }
.libs { width: 242px; flex: none; margin: 0 2px; background: #f5f5f5; }
.search { display: flex; align-items: center; height: 28px; margin: 12px 11px 0; padding: 0 5px 2px; gap: 8px; border-bottom: 1px solid #ddd; font-size: 12px; letter-spacing: -.36px; color: #666; }
.search svg { width: 10px; height: 10px; fill: none; stroke: #888; stroke-width: 1.3; }
.docassets { display: flex; align-items: center; gap: 8px; height: 34px; margin: 8px 10px 0 12px; padding-left: 9px; border-radius: 4px; background: #fafafa; font-size: 12px; letter-spacing: -.4px; }
.docassets svg { width: 12px; height: 12px; fill: none; stroke: #777; stroke-width: 1.2; }
.libhead { display: flex; align-items: center; justify-content: space-between; height: 43px; padding: 2px 11px 0 12px; border-bottom: 1px solid #d0d0d0; font-size: 10px; letter-spacing: .75px; color: #6a6a6a; }
.libhead svg { width: 10px; height: 10px; stroke: #aaa; }
.signin { display: flex; flex-direction: column; align-items: center; padding: 372px 0 0 3px; text-align: center; font-size: 12px; line-height: 16px; letter-spacing: -.27px; }
.signin svg { width: 48px; height: 32px; margin-bottom: 31px; }

.canvas { position: relative; flex: 1; overflow: hidden; background: #e4e4e4; }
.artboard { position: absolute; top: 121px; height: 754px; display: flex; flex-direction: column; background: #fff; box-shadow: 0 0 0 1px #cbcbcb; overflow: hidden; }
.ab1 { left: 0; width: 359px; }
.ab2 { left: 386px; width: 730px; }
.abname { position: absolute; left: 388px; top: 97px; font: 11px/17px "Noto Sans", sans-serif; letter-spacing: -.15px; color: #666; }
.sitebar { display: flex; height: 34px; flex: none; border-bottom: 1px solid #eee; }
.sitenav { display: flex; gap: 10px; margin-left: auto; margin-right: 34px; font: 500 6px/34px Inter, sans-serif; color: #f8ba36; }
.tabs { display: flex; width: 190px; background: #f9b317; margin-bottom: -1px; height: 34px; }
.tab { width: 37px; display: flex; flex-direction: column; align-items: center; padding-top: 5px; color: #222; }
.tab b { margin-top: 3px; font: 600 3.900px/6px Inter, sans-serif; color: #7a5a15; }
.tab.active, .tab.lit { color: #fff; }
.tab.active { background: #053785; width: 38px; }
.tab.active b, .tab.lit b { color: #fff; font-weight: 800; }
.tab.line { border-right: 1px solid #efab1a; }
.tab svg { height: 10.500px; }
.ic-people { width: 14px; } .ic-map { width: 12px; } .ic-news { width: 13px; padding-bottom: 1px; }
.user { display: flex; align-items: center; gap: 5px; padding-left: 12px; font: 4px Inter, sans-serif; color: #7a5a15; }
.user svg { width: 15px; height: 15px; }

.card { background: #fff; border-radius: 2px; box-shadow: 0 1px 26px #0000000f; }
.chart { flex: none; width: 307px; height: 194px; margin-top: 59px; }
.ranges { flex: none; width: 307px; height: 127px; margin-top: 14px; }
.ranges.one { margin-top: 44px; }
.card.chart > svg, .card.ranges > svg { width: 307.500px; height: 100%; }
.pills { display: flex; flex: none; gap: 12.500px; margin-top: 12px; height: 20px; }
.pills span { width: 90px; border-radius: 6px; background: #053785; color: #fff; text-align: center; font: 800 6.600px/20px Inter, sans-serif; white-space: nowrap; }
.pills .cut { width: 69px; margin-right: 1.500px; border-radius: 0 6px 6px 0; text-align: right; padding-right: 9px; direction: rtl; overflow: hidden; }
.sitefoot { display: flex; flex: none; margin-top: auto; height: 79px; background: #ebebeb; border-top: 2px solid #3465a4; }
.fcol { font: 5.300px/11.500px Roboto, sans-serif; color: #3f66a3; letter-spacing: -.2px; white-space: nowrap; }
.fcol h4 { font-size: 5.300px; line-height: 11.500px; color: #24529a; }
.fa, .fc { padding-top: 15px; } .fb { padding-top: 21px; }
.fb { margin-left: 14px; width: 113px; }
.seal { width: 47px; height: 53px; margin: 11px 0 0 182px; }

.brand { display: flex; align-items: center; margin-left: 53px; gap: 9px; }
.brand svg { width: 23px; height: 23px; }
.brand i, .brand b { display: block; font: 4.800px/6.300px Inter, sans-serif; white-space: nowrap; }
.brand i { color: #7b98c8; text-decoration: underline; font-size: 4.700px; }
.brand b { font-weight: 800; color: #053785; }
.brand .o { color: #f9b317; }
.row { display: flex; align-items: flex-start; padding: 14px 0 0 35px; }
.frame { border: 5px solid; background: #fff; flex: none; }
.sand { width: 261px; height: 343px; border-color: #eee2ae; padding: 17px 0 0 12px; }
.hazard { width: 225px; height: 212px; }
.sand h3 { margin-top: 3.500px; font: 800 9.700px/19px Inter, sans-serif; letter-spacing: .42px; color: #000; white-space: nowrap; }
.sand p, .maroon p { font: 7.800px/19px Inter, sans-serif; letter-spacing: .25px; color: #6b6b6b; white-space: nowrap; }
.sand p { margin-top: 6px; letter-spacing: .22px; }
.legend { width: 155px; padding: 26px 0 0 31px; }
.legend h2 { width: 84px; text-align: center; font: 800 11.500px/20px Inter, sans-serif; letter-spacing: .5px; color: #000; }
.legend ul { margin-top: 5px; }
.legend li { display: flex; align-items: center; gap: 10.500px; height: 25.200px; font: 6.300px Inter, sans-serif; color: #777; white-space: nowrap; }
.sw { width: 15px; height: 13.500px; }
.low { background: #ff0; } .med { background: #ff9100; } .high { background: #f00; } .area { background: #dadada; }
.grid { border: 1px solid #b5b5b5; background: repeating-linear-gradient(90deg, #e6e6e6 0 2px, #f6f6f6 2px 3px); }
.maroon { width: 253px; height: 319px; margin-top: 10px; border-color: #880015; padding-top: 7px; }
.maroon svg { width: 207px; height: 175px; margin-left: 15px; }
.maroon p { text-align: center; line-height: 18.800px; margin: 10.500px 0 0 -1px; }
.loc { margin: 10.500px 0 0 53px; font: 800 7.600px/12px Inter, sans-serif; letter-spacing: .5px; color: #000; }
.slate { width: 621px; height: 235px; margin: 16.500px 0 0 61px; border-color: #808080; overflow: hidden; }
.places { width: 587px; height: 214px; margin-left: 5px; padding: 25px 0 0 28.500px; }
.cols { display: flex; gap: 29.700px; }
.place { width: 157px; height: 160px; border: 2px solid transparent; text-align: center; font: 5.100px/12px "Open Sans", sans-serif; color: #444; white-space: nowrap; }
.place > svg { width: 153px; height: 115px; margin-bottom: 8px; }
.place p:nth-of-type(2) { margin-top: -.5px; }
.place.sel { border-color: #5b9cf0; }
.place a { color: #2b6d9c; border-bottom: .6px solid #999; margin: 0 1.500px; }
.place a.v { color: #b23bd0; }
.place a svg { display: inline; width: 4px; height: 4px; color: #333; }
.scroll { width: 271px; height: 3px; margin: 15px 0 0 129px; background: #ebebeb; }

.note { position: absolute; font: 700 27.500px/32px Lato, sans-serif; color: #7f7f7f; }
.n1 { left: 447px; top: 55px; }
.n2 { left: 1179px; top: 247px; }
.strokes { position: absolute; left: 0; top: -8px; width: 1920px; height: 1040px; fill: none; stroke: #7f7f7f; stroke-width: 5; stroke-linecap: round; pointer-events: none; }

.props { width: 288px; flex: none; background: #f5f5f5; color: #999; }
.sec { border-bottom: 2px solid #e4e4e4; }
.props h5 { font-size: 9.500px; font-weight: 400; letter-spacing: .85px; line-height: 14px; color: #8a8a8a; }
.aligns { display: flex; height: 52px; background: linear-gradient(#e4e4e4, #e4e4e4) 144px 0 / 1px 100% no-repeat; }
.aligns svg { width: 130px; height: 27px; margin: 11px 0 0 13px; flex: none; }
.aligns svg.r { width: 143px; margin: 11px 0 0 2px; }
.repeat { display: flex; align-items: center; height: 54px; padding: 0 0 2px 13px; }
.rg { display: flex; align-items: center; width: 107px; height: 26px; border: 1px solid #d8d8d8; border-radius: 3px; background: #fafafa; font-size: 11.500px; letter-spacing: -.2px; color: #a8a8a8; gap: 10px; padding-left: 8px; white-space: nowrap; }
.rg svg { width: 14px; height: 12px; fill: none; stroke: #aaa; }
.bool { width: 116px; height: 16px; margin-left: 35px; }
.comp { display: flex; align-items: center; justify-content: space-between; height: 43px; padding: 1px 17px 0 13px; }
.comp svg { width: 10px; height: 10px; }
.trans { height: 143px; padding: 14px 0 0 13px; }
.fields { display: grid; grid-template-columns: 64px 21px 70px; grid-template-rows: 22px 45px; row-gap: 23px; margin-top: 20px; }
.fields div { display: flex; gap: 8px; height: 22px; font-size: 12px; line-height: 13px; }
.fields label { width: 8px; font-size: 10px; color: #a5a5a5; }
.fields span { width: 48px; border-bottom: 1px solid #ddd; }
.fields .b label { width: 5px; }
.fields > svg { width: 10px; height: 42px; grid-row: 1 / 3; grid-column: 2; margin-top: 2px; }
.fields > .b { grid-column: 3; }
.lay { height: 88px; padding: 17px 22px 0 16px; }
.rr { display: flex; justify-content: space-between; align-items: center; margin-top: 23px; font-size: 11.500px; letter-spacing: -.15px; color: #b0b0b0; }
.toggle { width: 26px; height: 14px; border-radius: 7px; background: radial-gradient(circle at 19px 7px, #f5f5f5 5.200px, #c4c4c4 6px); }
.app2 { height: 112px; padding: 17px 16px 0 16px; }
.op { display: flex; justify-content: space-between; margin-top: 16px; }
.sl { font-size: 10px; letter-spacing: -.2px; line-height: 13px; color: #888; }
.sl div { display: flex; align-items: center; gap: 4px; margin-top: 6px; }
.sl i { width: 16px; height: 16px; border: 1.500px solid #d6d6d6; border-radius: 50%; }
.sl b { width: 188px; height: 2px; background: #dadada; }
.op em { width: 32px; height: 33px; padding-top: 10px; border-bottom: 1px solid #ddd; font-size: 11.500px; line-height: 14px; letter-spacing: -.1px; color: #888; }

.mapcard { position: absolute; left: 1487px; top: 595px; width: 356px; height: 362px; padding: 10px 0 0 10px; background: #fff; }
.mapcard > svg { width: 330px; height: 246px; }
.mapcard p { width: 330px; display: flex; justify-content: center; font-size: 10.500px; line-height: 13px; color: #444; white-space: pre; letter-spacing: -.08px; }
.mapcard a { color: #1f5a87; border-bottom: 1px solid #777; padding: 0 3px 0 1px; margin-right: 7px; display: flex; gap: 2px; }
.mapcard a:last-of-type { margin-right: 0; }
.mapcard a svg { width: 9px; height: 9px; margin-top: 2px; color: #000; }
.mapcard .l1 { margin-top: 24px; }
.mapcard .l2 { margin-top: 10px; letter-spacing: 0; }
.mapcard .l3 { margin-top: 14px; letter-spacing: -.12px; }
```
FILE: terrain.js
```js
// Scatters flood-depth cells over the hazard map and clearings over the woodland.
(function () {
  var seed = 7;
  function rnd() { seed = (seed * 16807) % 2147483647; return seed / 2147483647; }

  // Small drifting clusters of square cells, starting anywhere inside the box.
  function cells(color, n, run, x, y, w, h, size) {
    var d = "";
    for (var i = 0; i < n; i++) {
      var px = x + w * rnd(), py = y + h * rnd();
      for (var k = 0; k < run; k++) {
        var s = size * (0.5 + rnd());
        d += "M" + px.toFixed(1) + " " + py.toFixed(1) + "h" + s.toFixed(1) + "v" + (s * (0.6 + rnd())).toFixed(1) + "h-" + s.toFixed(1) + "z";
        px += (rnd() - 0.5) * size * 3;
        py += (rnd() - 0.4) * size * 3;
      }
    }
    return '<path fill="' + color + '" d="' + d + '"/>';
  }

  // Same cells, spread along a polyline.
  function along(color, per, pts, spread, size) {
    var out = "";
    for (var i = 1; i < pts.length; i++) {
      for (var k = 0; k < per; k++) {
        var t = rnd();
        var x = pts[i - 1][0] + (pts[i][0] - pts[i - 1][0]) * t + (rnd() + rnd() - 1) * spread;
        var y = pts[i - 1][1] + (pts[i][1] - pts[i - 1][1]) * t + (rnd() + rnd() - 1) * spread;
        var s = size * (0.5 + rnd());
        out += "M" + x.toFixed(1) + " " + y.toFixed(1) + "h" + s.toFixed(1) + "v" + (s * (0.6 + rnd())).toFixed(1) + "h-" + s.toFixed(1) + "z";
      }
    }
    return '<path fill="' + color + '" d="' + out + '"/>';
  }

  document.getElementById("specks").innerHTML =
    cells("#f8f8f8", 1100, 2, 340, 431, 521, 635, 2.6) +
    cells("#fff0a0", 110, 2, 340, 431, 521, 635, 2.8) +
    cells("#ffd9a8", 90, 3, 440, 431, 421, 635, 2.8) +
    cells("#fff15c", 14, 9, 355, 645, 90, 65, 4) +
    cells("#fff15c", 16, 7, 440, 600, 90, 90, 3.6) +
    cells("#ffe680", 20, 5, 440, 540, 140, 130, 3.2) +
    cells("#fff15c", 8, 6, 345, 725, 20, 90, 3.6) +
    along("#ffd27a", 70, [[735, 435], [745, 490], [775, 515]], 26, 4) +
    along("#ffc46e", 24, [[775, 515], [820, 560], [815, 680], [825, 740], [800, 800]], 24, 3.6) +
    along("#fff27a", 14, [[800, 560], [825, 680], [820, 760], [760, 850]], 26, 3.4) +
    along("#ffcb6b", 55, [[495, 935], [495, 1000], [465, 1066]], 22, 4.2) +
    along("#ffd36b", 40, [[500, 950], [530, 1010], [500, 1066]], 16, 4) +
    along("#ffc07a", 20, [[560, 800], [520, 880], [480, 960]], 22, 3) +
    along("#ffc07a", 18, [[580, 850], [585, 920], [600, 990], [590, 1060]], 18, 3.2) +
    cells("#ffd9a0", 22, 5, 460, 770, 90, 150, 2.8) +
    along("#fff27a", 24, [[800, 790], [740, 880], [730, 900]], 22, 3.4) +
    along("#ffc88a", 20, [[720, 900], [735, 960], [700, 1060]], 22, 3.4) +
    cells("#fff27a", 20, 5, 760, 920, 100, 140, 3.2) +
    cells("#ffcf95", 18, 5, 600, 980, 250, 80, 3) +
    cells("#fb7a7a", 14, 3, 590, 530, 150, 170, 2.4) +
    cells("#fb7a7a", 14, 3, 770, 520, 85, 530, 2.6);

  document.getElementById("woodFlecks").innerHTML =
    cells("#c9dcae", 90, 7, 37, 180, 300, 209, 6) +
    cells("#9fc07f", 60, 4, 37, 180, 300, 209, 4) +
    cells("#dfe8cb", 45, 5, 37, 180, 300, 209, 4.5);
})();
```
